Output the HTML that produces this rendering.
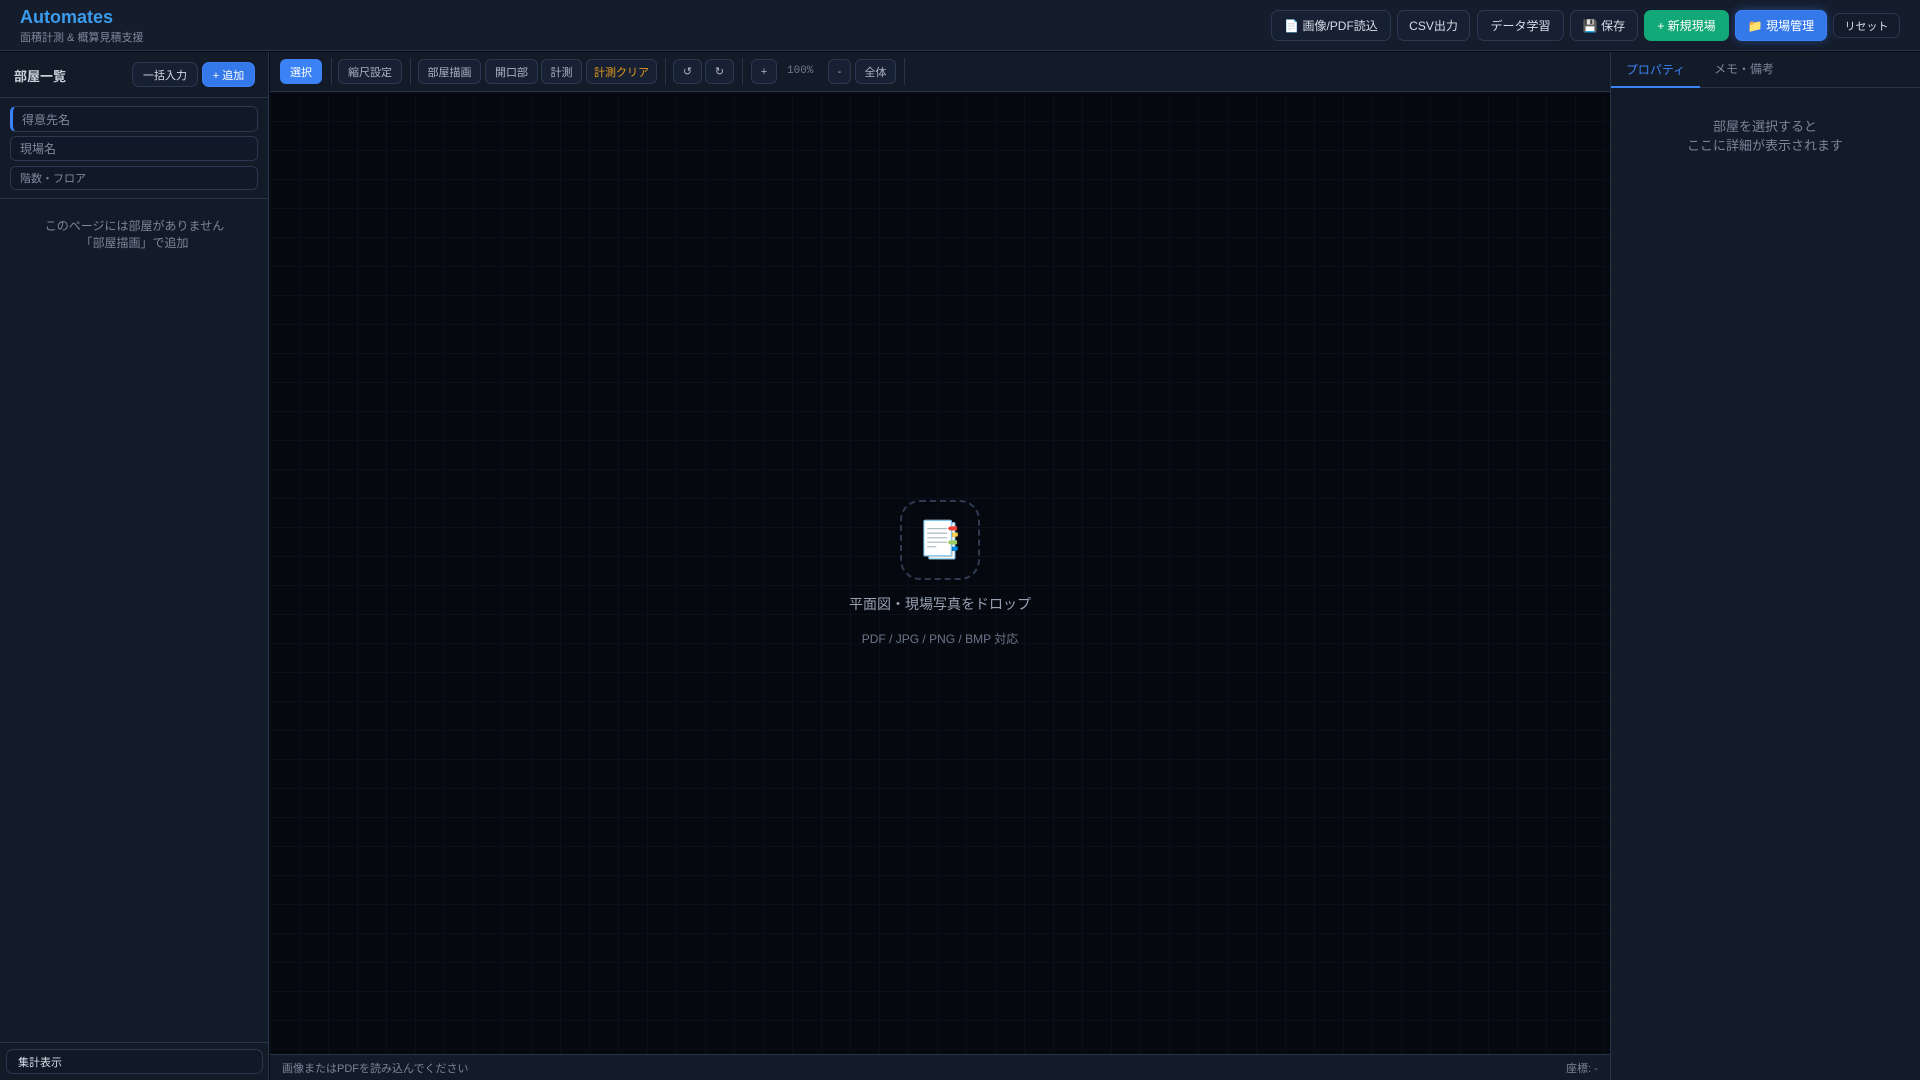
<!DOCTYPE html>
<html><head><meta charset="utf-8"><style>
*{box-sizing:border-box;margin:0;padding:0}
body{width:1920px;height:1080px;overflow:hidden;background:#060a12;font-family:"Liberation Sans","Noto Sans CJK JP",sans-serif;color:#c9d1dc;position:relative}
.abs{position:absolute}
.hdr{left:0;top:0;width:1920px;height:51px;background:#151c2b;border-bottom:1px solid #2a3448}
.btn{position:absolute;display:flex;align-items:center;justify-content:center;border:1px solid #2c3850;background:#172032;border-radius:7px;font-size:12px;color:#d6dce6;white-space:nowrap}
.tb{position:absolute;top:59px;height:25px;display:flex;align-items:center;justify-content:center;border:1px solid #2c3850;background:#182133;border-radius:6px;font-size:11px;color:#a8b2c2}
.sep{position:absolute;top:58px;width:1px;height:27px;background:#2a3448}
.inp{position:absolute;left:10px;width:248px;border:1px solid #2c3850;border-radius:6px;background:#111827;font-size:12px;color:#7f8a9c;padding-left:9px;display:flex;align-items:center}
</style></head><body>
<div class="abs hdr"></div>
<div class="abs" style="left:20px;top:7px;font-size:18px;font-weight:bold;color:#3a9cec">Automates</div>
<div class="abs" style="left:20px;top:29px;font-size:11px;color:#7d889a">面積計測 &amp; 概算見積支援</div>
<div class="btn" style="left:1271px;top:10px;width:120px;height:31px">📄 画像/PDF読込</div>
<div class="btn" style="left:1397px;top:10px;width:73px;height:31px">CSV出力</div>
<div class="btn" style="left:1477px;top:10px;width:87px;height:31px">データ学習</div>
<div class="btn" style="left:1570px;top:10px;width:68px;height:31px">💾 保存</div>
<div class="btn" style="left:1644px;top:10px;width:85px;height:31px;background:#12a877;border-color:#12a877;color:#fff">+ 新規現場</div>
<div class="btn" style="left:1735px;top:10px;width:92px;height:31px;background:#3478ea;border-color:#3b82f6;color:#fff;box-shadow:0 0 10px rgba(59,130,246,.4)">📁 現場管理</div>
<div class="btn" style="left:1833px;top:13px;width:67px;height:25px;font-size:11px;background:#141b2a">リセット</div>

<div class="abs" style="left:0;top:52px;width:269px;height:1028px;background:#131a28;border-right:1px solid #2a3448"></div>
<div class="abs" style="left:0;top:97px;width:269px;height:1px;background:#2a3448"></div>
<div class="abs" style="left:14px;top:66px;font-size:13px;font-weight:bold;color:#c9d1dc">部屋一覧</div>
<div class="btn" style="left:132px;top:62px;width:66px;height:25px;font-size:11px">一括入力</div>
<div class="btn" style="left:202px;top:62px;width:53px;height:25px;font-size:11px;background:#3478ea;border-color:#3b82f6;color:#fff">+ 追加</div>
<div class="inp" style="top:106px;height:26px;border-left:3px solid #3b82f6">得意先名</div>
<div class="inp" style="top:136px;height:25px">現場名</div>
<div class="inp" style="top:166px;height:24px;font-size:11px">階数・フロア</div>
<div class="abs" style="left:0;top:198px;width:269px;height:1px;background:#2a3448"></div>
<div class="abs" style="left:0;top:218px;width:269px;text-align:center;font-size:12px;line-height:17px;color:#7a8598">このページには部屋がありません<br>「部屋描画」で追加</div>
<div class="abs" style="left:0;top:1042px;width:269px;height:1px;background:#2a3448"></div>
<div class="btn" style="left:6px;top:1049px;width:257px;height:25px;justify-content:flex-start;padding-left:11px;font-size:11px;background:#111827">集計表示</div>

<div class="abs" style="left:270px;top:52px;width:1340px;height:40px;background:#131a28;border-bottom:1px solid #2a3448"></div>
<div class="tb" style="left:280px;width:42px;background:#3b82f6;border-color:#3b82f6;color:#fff">選択</div>
<div class="sep" style="left:331px"></div>
<div class="tb" style="left:338px;width:64px">縮尺設定</div>
<div class="sep" style="left:410px"></div>
<div class="tb" style="left:418px;width:63px">部屋描画</div>
<div class="tb" style="left:485px;width:53px">開口部</div>
<div class="tb" style="left:541px;width:41px">計測</div>
<div class="tb" style="left:586px;width:71px;color:#e59a1a">計測クリア</div>
<div class="sep" style="left:665px"></div>
<div class="tb" style="left:673px;width:29px">↺</div>
<div class="tb" style="left:705px;width:29px">↻</div>
<div class="sep" style="left:742px"></div>
<div class="tb" style="left:751px;width:26px">+</div>
<div class="abs" style="left:787px;top:65px;font-size:11px;color:#6f7a8c;font-family:'Liberation Mono',monospace">100%</div>
<div class="tb" style="left:828px;width:23px">-</div>
<div class="tb" style="left:855px;width:41px">全体</div>
<div class="sep" style="left:904px"></div>

<div class="abs" style="left:270px;top:92px;width:1340px;height:962px;background-color:#05080f;background-image:linear-gradient(#0a0f1a 1px,transparent 1px),linear-gradient(90deg,#0a0f1a 1px,transparent 1px);background-size:29px 29px"></div>
<div class="abs" style="left:900px;top:500px;width:80px;height:80px;border:2px dashed #2e3b52;border-radius:20px;display:flex;align-items:center;justify-content:center;font-size:36px">📑</div>
<div class="abs" style="left:740px;top:594px;width:400px;text-align:center;font-size:14px;color:#97a2b3">平面図・現場写真をドロップ</div>
<div class="abs" style="left:740px;top:630px;width:400px;text-align:center;font-size:12px;color:#6b7689">PDF / JPG / PNG / BMP 対応</div>
<div class="abs" style="left:270px;top:1054px;width:1340px;height:26px;background:#131a28;border-top:1px solid #2a3448"></div>
<div class="abs" style="left:282px;top:1060px;font-size:11px;color:#7a8598">画像またはPDFを読み込んでください</div>
<div class="abs" style="left:1566px;top:1060px;font-size:11px;color:#7a8598">座標: -</div>

<div class="abs" style="left:1610px;top:52px;width:310px;height:1028px;background:#131a28;border-left:1px solid #2a3448"></div>
<div class="abs" style="left:1610px;top:87px;width:310px;height:1px;background:#2a3448"></div>
<div class="abs" style="left:1611px;top:52px;width:89px;height:36px;border-bottom:2px solid #3b82f6;color:#3b82f6;font-size:12px;display:flex;align-items:center;justify-content:center">プロパティ</div>
<div class="abs" style="left:1714px;top:60px;font-size:12px;color:#7a8598">メモ・備考</div>
<div class="abs" style="left:1610px;top:117px;width:310px;text-align:center;font-size:13px;line-height:19px;color:#7a8598">部屋を選択すると<br>ここに詳細が表示されます</div>
</body></html>
